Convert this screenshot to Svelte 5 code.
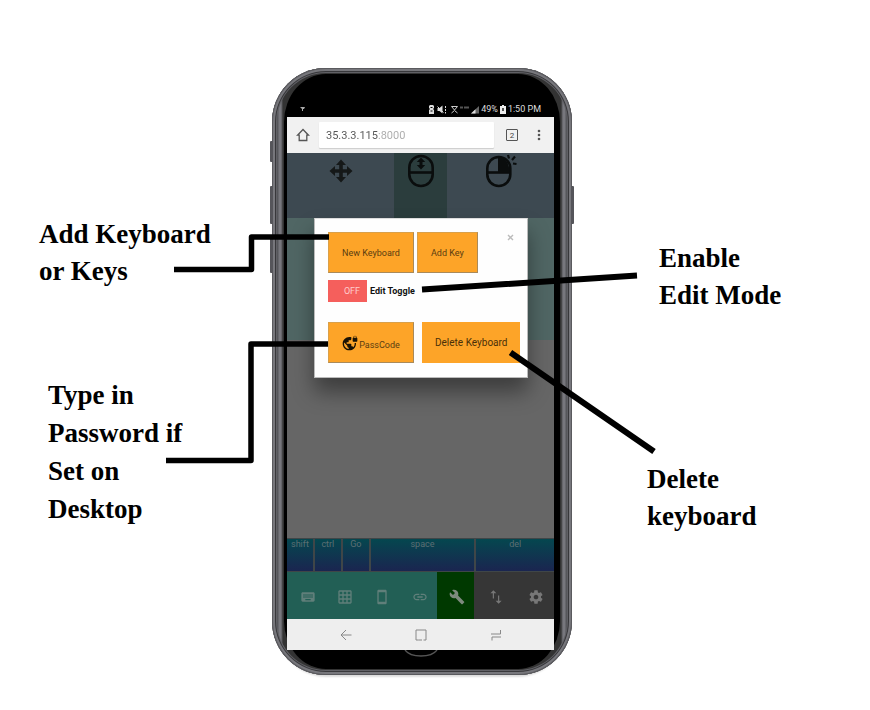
<script>
  const keys = [
    { label: 'shift', span: 1 },
    { label: 'ctrl', span: 1 },
    { label: 'Go', span: 1 },
    { label: 'space', span: 4 },
    { label: 'del', span: 3 },
  ];

  const tabs = [
    { name: 'Keyboard', tone: 'teal', size: 16, d: 'M20 5H4c-1.1 0-1.99.9-1.99 2L2 17c0 1.1.9 2 2 2h16c1.1 0 2-.9 2-2V7c0-1.1-.9-2-2-2zm-9 3h2v2h-2V8zm0 3h2v2h-2v-2zM8 8h2v2H8V8zm0 3h2v2H8v-2zm-1 2H5v-2h2v2zm0-3H5V8h2v2zm9 7H8v-2h8v2zm0-4h-2v-2h2v2zm0-3h-2V8h2v2zm3 3h-2v-2h2v2zm0-3h-2V8h2v2z' },
    { name: 'Grid', tone: 'teal', size: 16, d: 'M20 2H4c-1.1 0-2 .9-2 2v16c0 1.1.9 2 2 2h16c1.1 0 2-.9 2-2V4c0-1.1-.9-2-2-2zM8 20H4v-4h4v4zm0-6H4v-4h4v4zm0-6H4V4h4v4zm6 12h-4v-4h4v4zm0-6h-4v-4h4v4zm0-6h-4V4h4v4zm6 12h-4v-4h4v4zm0-6h-4v-4h4v4zm0-6h-4V4h4v4z' },
    { name: 'Phone', tone: 'teal', size: 16, d: 'M17 1.01L7 1c-1.1 0-2 .9-2 2v18c0 1.1.9 2 2 2h10c1.1 0 2-.9 2-2V3c0-1.1-.9-1.99-2-1.99zM17 19H7V5h10v14z' },
    { name: 'Link', tone: 'teal', size: 16, d: 'M3.9 12c0-1.71 1.39-3.1 3.1-3.1h4V7H7c-2.76 0-5 2.24-5 5s2.24 5 5 5h4v-1.9H7c-1.71 0-3.1-1.39-3.1-3.1zM8 13h8v-2H8v2zm9-6h-4v1.9h4c1.71 0 3.1 1.39 3.1 3.1s-1.39 3.1-3.1 3.1h-4V17h4c2.76 0 5-2.24 5-5s-2.24-5-5-5z' },
    { name: 'Tools', tone: 'green', size: 16, d: 'M22.7 19l-9.1-9.1c.9-2.3.4-5-1.5-6.9-2-2-5-2.4-7.4-1.3L9 6 6 9 1.6 4.7C.4 7.1.9 10.1 2.9 12.1c1.9 1.9 4.6 2.4 6.9 1.5l9.1 9.1c.4.4 1 .4 1.4 0l2.3-2.3c.5-.4.5-1.1.1-1.4z' },
    { name: 'Import or export', tone: 'gray', size: 18, d: 'M8.500 3L4.500 7h3.200V14h1.600V7H12.500L8.500 3zm7.800 14V10h-1.600v7H11.500l4 4 4-4h-3.200z' },
    { name: 'Settings', tone: 'gray', size: 16, d: 'M19.43 12.98c.04-.32.07-.64.07-.98s-.03-.66-.07-.98l2.11-1.65c.19-.15.24-.42.12-.64l-2-3.46c-.12-.22-.39-.3-.61-.22l-2.49 1c-.52-.4-1.08-.73-1.69-.98l-.38-2.65C14.46 2.18 14.25 2 14 2h-4c-.25 0-.46.18-.49.42l-.38 2.65c-.61.25-1.17.59-1.69.98l-2.49-1c-.23-.09-.49 0-.61.22l-2 3.46c-.13.22-.07.49.12.64l2.11 1.65c-.04.32-.07.65-.07.98s.03.66.07.98l-2.11 1.65c-.19.15-.24.42-.12.64l2 3.46c.12.22.39.3.61.22l2.49-1c.52.4 1.08.73 1.69.98l.38 2.65c.03.24.24.42.49.42h4c.25 0 .46-.18.49-.42l.38-2.65c.61-.25 1.17-.59 1.69-.98l2.49 1c.23.09.49 0 .61-.22l2-3.46c.12-.22.07-.49-.12-.64l-2.11-1.65zM12 15.5c-1.93 0-3.5-1.57-3.5-3.5s1.57-3.5 3.5-3.5 3.5 1.57 3.5 3.5-1.57 3.5-3.5 3.5z' },
  ];

  let editing = $state(false);
  let address = $state('35.3.3.115:8000');
</script>

<main class="diagram">
  <section class="notes left">
    <p>Add Keyboard<br />or Keys</p>
    <p class="tall">Type in<br />Password if<br />Set on<br />Desktop</p>
  </section>

  <div class="phone">
    <i class="side mute"></i>
    <i class="side up"></i>
    <i class="side down"></i>
    <i class="side power"></i>

    <div class="glass">
      <header class="status">
        <svg class="usb" width="6" height="6" viewBox="0 0 6 6"><path d="M0 1h5L4 3H3v2H2V3z" fill="#aaa" /></svg>
        <svg width="51" height="9" viewBox="0 0 51 9" fill="#ddd">
          <path d="M2 0h3l1 1v2L5 4l1 1v4H1V5l1-1-1-1V1z" />
          <path d="M2.500 2.500h2M2.500 6h2" stroke="#000" />
          <path d="M9.500 3h2l3-2.500v8l-3-2.500h-2z" />
          <path d="M9.500 1.500l6 6" stroke="#ddd" />
          <path d="M17.500 1v2M17.500 4v2M17.500 7v1.500" stroke="#ddd" />
          <path d="M23.500 1.500h6l-3 3.500zM23.500 8l3-2.500 3 2.500" stroke="#ccc" fill="none" />
          <path d="M32 2.500h3M36 2.500h5" stroke="#555" stroke-width="2" />
          <path d="M43 8.500L51 1v7.500z" fill="#666" />
          <path d="M43 8.500l4.500-4.200v4.200z" />
        </svg>
        <span>49%</span>
        <svg width="6" height="9" viewBox="0 0 6 9"><path d="M2 0h2v1h2v8H0V1h2z" fill="#eee" /><path d="M2 3h2v3H2z" fill="#555" /></svg>
        <span>1:50 PM</span>
      </header>

      <div class="screen">
        <div class="browser">
          <button class="bare" aria-label="Home">
            <svg width="14" height="14" viewBox="0 0 14 14" fill="none" stroke="#555" stroke-width="1.300"><path d="M1.500 7.200L7 1.500l5.500 5.700H10.800V12.500H3.200V7.200z" /></svg>
          </button>
          <input class="address" type="text" aria-label="Address" bind:value={address} />
          <button class="bare" aria-label="Open tabs"><span class="count">2</span></button>
          <button class="bare" aria-label="Menu">
            <svg width="4" height="12" viewBox="0 0 4 12" fill="#555"><circle cx="2" cy="2" r="1.300" /><circle cx="2" cy="6" r="1.300" /><circle cx="2" cy="10" r="1.300" /></svg>
          </button>
        </div>

        <div class="mouse">
          <button class="bare" aria-label="Move pointer">
            <svg width="24" height="34" viewBox="0 0 24 34" fill="#151818"><path d="M12 5.500l5 5.500h-3.200v4.200H18V12l5.500 5-5.500 5v-3.200h-4.200V23H17l-5 5.500L7 23h3.200v-4.200H6V22L.5 17 6 12v3.200h4.200V11H7z" /></svg>
          </button>
          <button class="bare on" aria-label="Scroll">
            <svg width="28" height="34" viewBox="0 0 28 34" fill="none" stroke="#0a0d0d" stroke-width="2.600"><rect x="2.300" y="2" width="23.400" height="30" rx="11.700" /><path d="M2 18.500h24" /><path d="M14 3.500l4.200 4.500H15.500v3h2.700L14 15.500 9.800 11h2.700V8H9.800z" fill="#0a0d0d" stroke="none" /></svg>
          </button>
          <button class="bare" aria-label="Right click">
            <svg width="32" height="34" viewBox="0 0 32 34" fill="none" stroke="#0a0d0d" stroke-width="2.600"><rect x="2.300" y="3" width="23" height="29" rx="11.500" /><path d="M2 18.500h23" /><path d="M13 3.500c7 0 11.500 5 11.500 15H13z" fill="#0a0d0d" stroke="none" /><path d="M23 1l1 3.500M27 6l3-3.500M28 9.500l3.500.5" stroke-width="2.200" /></svg>
          </button>
        </div>

        <div class="pad"></div>
        <div class="rest"></div>

        <div class="keys">
          {#each keys as key}
            <button style="flex-grow: {key.span}">{key.label}</button>
          {/each}
        </div>

        <nav class="tabs">
          {#each tabs as tab}
            <button class={tab.tone} aria-label={tab.name}>
              <svg width={tab.size} height={tab.size} viewBox="0 0 24 24" fill="currentColor"><path d={tab.d} /></svg>
            </button>
          {/each}
        </nav>

        <div class="system">
          <button class="bare" aria-label="Back"><svg width="12" height="12" viewBox="0 0 12 12"><path d="M6 1L1 6l5 5M1 6h10.500" /></svg></button>
          <button class="bare" aria-label="Home screen"><svg width="12" height="12" viewBox="0 0 12 12"><path d="M3.500 11H1V1h10v10H8.500M3.500 11H7" /></svg></button>
          <button class="bare" aria-label="Recent apps"><svg width="12" height="12" viewBox="0 0 12 12"><path d="M1 5h9.500V1M11 8H2v3.500" /></svg></button>
        </div>

        <div class="modal" role="dialog" aria-label="Keyboard options">
          <button class="close" aria-label="Close"><svg width="7" height="7" viewBox="0 0 7 7" stroke="#bbb" stroke-width="1.400"><path d="M1 1l5 5M6 1L1 6" /></svg></button>
          <div class="row">
            <button class="action wide">New Keyboard</button>
            <button class="action">Add Key</button>
          </div>
          <label class="toggle">
            <input type="checkbox" bind:checked={editing} />
            <span class="switch">{editing ? 'ON' : 'OFF'}</span>
            <span>Edit Toggle</span>
          </label>
          <div class="row lower">
            <button class="action wide">
              <svg width="16" height="16" viewBox="0 0 24 24"><path d="M22 4v-.5C22 2.120 20.880 1 19.500 1S17 2.120 17 3.500V4c-.55 0-1 .45-1 1v4c0 .55.45 1 1 1h5c.55 0 1-.45 1-1V5c0-.55-.45-1-1-1zm-.8 0h-3.400v-.5c0-.94.76-1.700 1.700-1.700s1.700.76 1.700 1.700V4zm-2.280 8c.04.33.08.66.08 1 0 2.080-.8 3.970-2.100 5.390-.26-.81-1-1.390-1.900-1.390h-1v-3c0-.55-.45-1-1-1H7v-2h2c.55 0 1-.45 1-1V8h2c1.100 0 2-.9 2-2V3.460c-.95-.3-1.950-.46-3-.46C5.480 3 1 7.480 1 13s4.480 10 10 10 10-4.480 10-10c0-.34-.02-.67-.05-1h-2.030zM10 20.930c-3.950-.49-7-3.850-7-7.930 0-.62.08-1.210.21-1.790L8 16v1c0 1.100.9 2 2 2v1.930z" fill="#1a1204" /></svg>
              <span class="caption">PassCode</span>
            </button>
            <button class="action flat">Delete Keyboard</button>
          </div>
        </div>
      </div>

      <div class="chin">
        <svg width="36" height="8" viewBox="0 0 36 8" fill="none" stroke="#555" stroke-width="1.300"><path d="M2 0c6 8 26 8 32 0" /></svg>
      </div>
    </div>

    <svg class="leaders" viewBox="272 68 300 607" aria-hidden="true">
      <g fill="none" stroke="#000" stroke-linejoin="round">
        <path d="M174 269.500H251.500V237H329" stroke-width="5.500" />
        <path d="M166 460.500H251V344H328" stroke-width="5.500" />
        <path d="M422 289.500L637 275.500M510.500 352.500L654 451.500" stroke-width="6" />
      </g>
    </svg>
  </div>

  <section class="notes right">
    <p>Enable<br />Edit Mode</p>
    <p>Delete<br />keyboard</p>
  </section>
</main>

<style>
  :global(body) {
    background: #fff;
  }
  .diagram {
    display: grid;
    grid-template-columns: minmax(0, 272fr) 300px minmax(0, 298fr);
    align-items: start;
    padding-bottom: 32px;
    font-family: Roboto, 'Liberation Sans', sans-serif;
  }
  .diagram * {
    box-sizing: border-box;
  }
  button,
  input {
    margin: 0;
    font-family: inherit;
  }
  svg {
    display: block;
    flex: none;
  }

  .notes {
    display: flex;
    flex-direction: column;
    font: bold 27px/37px 'Liberation Serif', 'Times New Roman', serif;
    color: #000;
    white-space: nowrap;
  }
  .notes p {
    margin: 0;
  }
  .left {
    padding: 216px 0 0 39px;
    gap: 86px;
  }
  .left .tall {
    padding-left: 9px;
    line-height: 38px;
  }
  .right {
    padding: 240px 0 0 75px;
    gap: 147px;
  }
  .right p:first-child {
    padding-left: 12px;
  }

  .phone {
    position: relative;
    margin-top: 68px;
    padding: 6px 12px;
    border-radius: 54px;
    background: linear-gradient(90deg, #55565a 0 6px, #77777d 7px 9px, #333 11px 12px, #333 288px 289px, #77777d 291px 293px, #55565a 294px);
    box-shadow:
      inset 0 0 0 1px #5a5a5e,
      inset 0 0 0 3px #77777c,
      inset 0 0 0 4px #38383b,
      inset 0 0 0 5px #606065,
      0 8px 2px -6px #ddd;
  }
  .side {
    position: absolute;
    left: -2px;
    width: 3px;
    height: 38px;
    border-radius: 1px;
    background: #55555a;
  }
  .mute {
    top: 73px;
    height: 21px;
  }
  .up,
  .power {
    top: 118px;
  }
  .down {
    top: 167px;
  }
  .power {
    left: auto;
    right: -2px;
  }
  .glass {
    display: flex;
    flex-direction: column;
    padding: 0 6px 0 3px;
    border-radius: 42px / 48px;
    background: #000;
  }
  .status {
    display: flex;
    align-items: center;
    justify-content: flex-end;
    gap: 2px;
    height: 43px;
    padding: 27px 13px 0 13px;
    font-size: 9px;
    color: #ddd;
    white-space: nowrap;
  }
  .usb {
    margin-right: auto;
  }
  .screen {
    position: relative;
    background: #666;
  }
  .bare {
    display: flex;
    align-items: center;
    justify-content: center;
    padding: 0;
    border: 0;
    background: none;
  }

  .browser {
    display: flex;
    align-items: center;
    height: 36px;
    padding: 0 9px;
    gap: 9px;
    background: #f1f1f1;
  }
  .address {
    flex: 1;
    min-width: 0;
    height: 26px;
    padding: 0 7px;
    border: 0;
    border-radius: 1px;
    /* the host is darker than the port that follows it */
    background-color: #fff;
    background-image: linear-gradient(90deg, #555 59px, #aaa 59px), linear-gradient(#fff, #fff);
    background-clip: text, border-box;
    box-shadow: 0 1px 1px #ccc;
    font-size: 11px;
    color: transparent;
    caret-color: #555;
  }
  .count {
    display: flex;
    align-items: center;
    justify-content: center;
    width: 12px;
    height: 12px;
    margin: 0 6px 0 3px;
    border: 1px solid #555;
    border-radius: 1px;
    font-size: 8px;
    color: #444;
  }
  .browser .bare:last-child {
    width: 12px;
  }

  .mouse {
    display: grid;
    grid-template-columns: 2fr 1fr 2fr;
    height: 65px;
    background: #3d4951;
  }
  .mouse .bare {
    align-items: flex-start;
    padding: 1px 0 0 1px;
  }
  .mouse .on {
    background: #2b3d3d;
  }
  .pad {
    height: 122px;
    background: #506664;
  }
  .rest {
    height: 198px;
  }

  .keys {
    display: flex;
    height: 34px;
    background: linear-gradient(#04484f, #1b2450);
  }
  .keys button {
    flex: 1 1 0;
    min-width: 0;
    padding: 0 0 22px;
    border: solid #3f4648;
    border-width: 1px 2px 1px 0;
    background: none;
    font-size: 9px;
    line-height: 10px;
    color: #5c6f74;
  }
  .keys button:last-child {
    border-right: 0;
  }

  .tabs {
    display: grid;
    grid-template-columns: repeat(5, 14fr) repeat(2, 15fr);
    height: 47px;
  }
  .tabs button {
    display: flex;
    align-items: center;
    justify-content: center;
    padding: 2px 0 0 4px;
    border: 0;
    background: #225f55;
    color: #607f7a;
  }
  .tabs .green {
    background: #003900;
    color: #7d8a7d;
  }
  .tabs .gray {
    background: #363636;
    color: #777;
  }

  .system {
    display: grid;
    grid-template-columns: repeat(3, 75px);
    justify-content: center;
    height: 31px;
    background: #eee;
  }
  .system svg {
    fill: none;
    stroke: #888;
  }

  .modal {
    position: absolute;
    top: 101px;
    left: 27px;
    right: 26px;
    padding: 13px 6px 14px 13px;
    border: 1px solid #bbb;
    border-top-color: #ddd;
    background: #fefefe;
    box-shadow: 0 14px 20px rgba(0, 0, 0, 0.4);
  }
  .close {
    position: absolute;
    top: 12px;
    right: 10px;
    padding: 3px;
    border: 0;
    background: none;
  }
  .row {
    display: flex;
    gap: 3px;
  }
  .lower {
    margin-top: 20px;
    gap: 8px;
  }
  .action {
    display: flex;
    align-items: center;
    justify-content: center;
    height: 41px;
    padding: 0 13px;
    border: 1px solid;
    border-color: #d9a04a #a98a5a #a98a5a #d9a04a;
    background: #fda428;
    font-size: 9px;
    color: #5a3d10;
    white-space: nowrap;
  }
  .wide {
    width: 86px;
  }
  .caption {
    padding: 4px 0 0 1px;
  }
  .flat {
    border-color: #fda428;
    padding: 0 12px;
    font-size: 10px;
    color: #4a3008;
  }
  .toggle {
    position: relative;
    display: flex;
    align-items: center;
    gap: 3px;
    margin-top: 7px;
    font-size: 9px;
    font-weight: bold;
    color: #111;
  }
  .toggle input {
    position: absolute;
    inset: 0;
    width: 39px;
    height: 22px;
    opacity: 0;
  }
  .switch {
    width: 39px;
    height: 22px;
    padding-left: 9px;
    background: #f55f5c;
    font-weight: normal;
    line-height: 23px;
    text-align: center;
    color: #fcc;
  }

  .chin {
    display: flex;
    justify-content: center;
    height: 19px;
  }
  .leaders {
    position: absolute;
    inset: 0;
    width: 100%;
    height: 607px;
    overflow: visible;
    pointer-events: none;
  }
</style>
